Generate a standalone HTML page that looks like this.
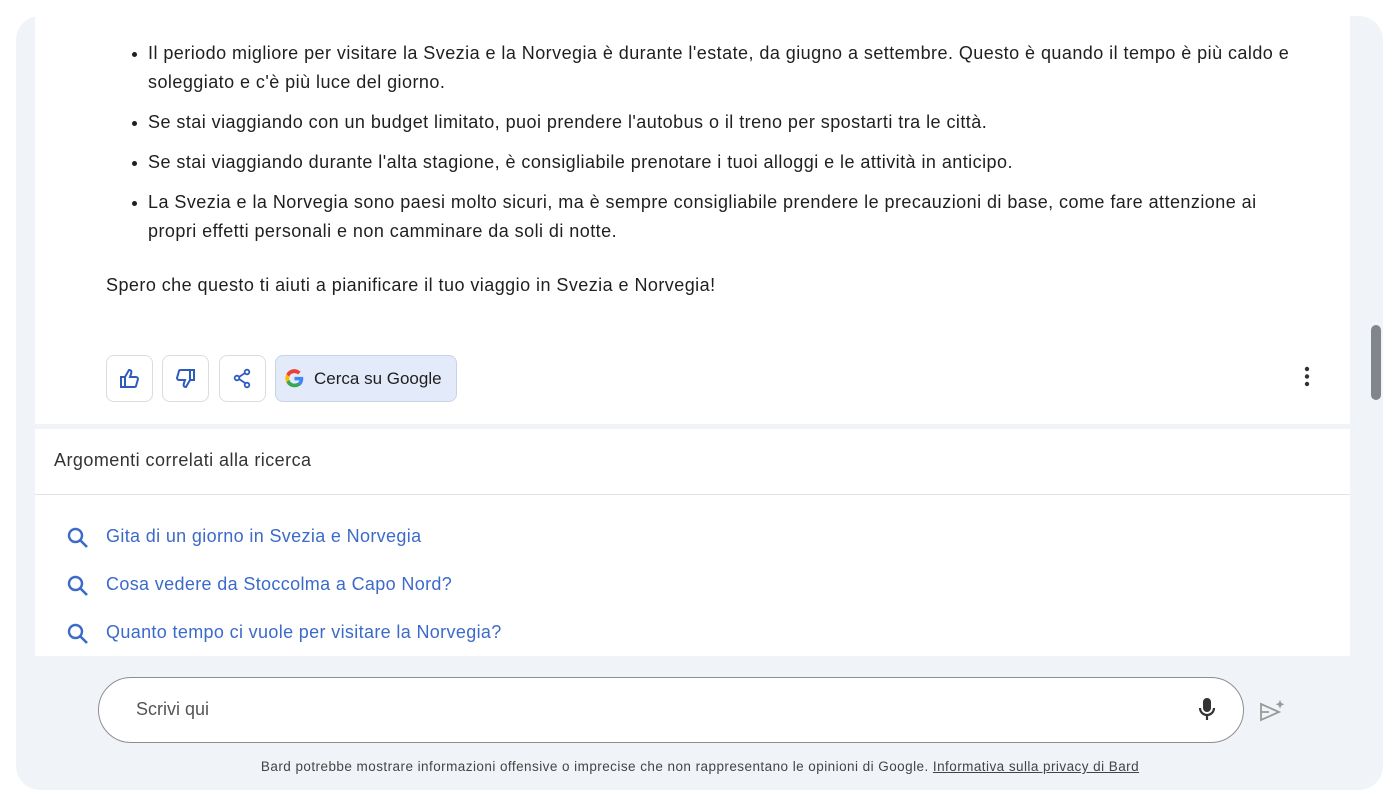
<!DOCTYPE html>
<html><head><meta charset="utf-8"><style>
*{margin:0;padding:0;box-sizing:border-box}
body{width:1400px;height:799px;background:#fff;font-family:"Liberation Sans",sans-serif;position:relative;overflow:hidden;color:#1f1f1f}
.panel{position:absolute;left:16px;top:16px;width:1367px;height:774px;background:#f0f4f9;border-radius:24px}
.card1{position:absolute;left:35px;top:16px;width:1315px;height:408px;background:#fff}
.card2{position:absolute;left:35px;top:429px;width:1315px;height:227px;background:#fff}
ul{position:absolute;left:148px;top:39px;width:1150px;font-size:18px;letter-spacing:0.45px;line-height:29px;list-style:none}
li{position:relative;margin-bottom:11px}
li:before{content:"";position:absolute;left:-16px;top:13px;width:5px;height:5px;border-radius:50%;background:#1f1f1f}
.p{position:absolute;left:106px;top:275px;font-size:18px;letter-spacing:0.45px}
.btn{position:absolute;top:355px;height:47px;border:1px solid #dadce0;border-radius:8px;background:#fff}
.g{position:absolute;left:275px;top:355px;width:182px;height:47px;border-radius:8px;background:#e3ebfa;border:1px solid #c9d3e6;font-size:17px;line-height:45px;padding-left:38px}
.hdr{position:absolute;left:54px;top:450px;font-size:18px;letter-spacing:0.45px;color:#333}
.line{position:absolute;left:35px;top:494px;width:1315px;height:1px;background:#e3e3e3}
.lk{position:absolute;left:106px;font-size:18px;letter-spacing:0.35px;color:#3b6ac9}
.sr{position:absolute;left:66px}
.inp{position:absolute;left:98px;top:677px;width:1146px;height:66px;border:1px solid #8e8e8e;border-radius:33px;background:#fff}
.ph{position:absolute;left:136px;top:699px;font-size:18px;color:#555}
.foot{position:absolute;left:0;width:1400px;top:759px;text-align:center;font-size:13.5px;letter-spacing:0.45px;color:#444}
.sb{position:absolute;left:1371px;top:325px;width:10px;height:75px;border-radius:5px;background:#80868b}
</style></head><body>
<div class="panel"></div>
<div class="card1"></div>
<div class="card2"></div>
<div class="sb"></div>
<ul>
<li>Il periodo migliore per visitare la Svezia e la Norvegia è durante l'estate, da giugno a settembre. Questo è quando il tempo è più caldo e soleggiato e c'è più luce del giorno.</li>
<li>Se stai viaggiando con un budget limitato, puoi prendere l'autobus o il treno per spostarti tra le città.</li>
<li>Se stai viaggiando durante l'alta stagione, è consigliabile prenotare i tuoi alloggi e le attività in anticipo.</li>
<li>La Svezia e la Norvegia sono paesi molto sicuri, ma è sempre consigliabile prendere le precauzioni di base, come fare attenzione ai propri effetti personali e non camminare da soli di notte.</li>
</ul>
<div class="p">Spero che questo ti aiuti a pianificare il tuo viaggio in Svezia e Norvegia!</div>
<div class="btn" style="left:106px;width:47px"><svg width="45" height="45" viewBox="0 0 45 45"><path d="M14 21h4v10h-4zM18 21l4-7c2 0 3 1 2 4l-1 3h6c1 0 2 1 2 2l-2 7c0 1-1 1-2 1h-9" fill="none" stroke="#2f5bbf" stroke-width="2"/></svg></div>
<div class="btn" style="left:162px;width:47px"><svg width="45" height="45" viewBox="0 0 45 45"><path d="M31 24h-4V14h4zM27 24l-4 7c-2 0-3-1-2-4l1-3h-6c-1 0-2-1-2-2l2-7c0-1 1-1 2-1h9" fill="none" stroke="#2f5bbf" stroke-width="2"/></svg></div>
<div class="btn" style="left:219px;width:47px"><svg width="45" height="45" viewBox="0 0 45 45"><circle cx="27" cy="16" r="2.3" fill="none" stroke="#2f5bbf" stroke-width="1.8"/><circle cx="17" cy="22" r="2.3" fill="none" stroke="#2f5bbf" stroke-width="1.8"/><circle cx="27" cy="29" r="2.3" fill="none" stroke="#2f5bbf" stroke-width="1.8"/><path d="M19 21l6-4M19 23l6 4" stroke="#2f5bbf" stroke-width="1.8"/></svg></div>
<div class="g"><svg style="position:absolute;left:8px;top:12px" width="21" height="21" viewBox="0 0 24 24"><path d="M22 12.2c0-.7-.1-1.4-.2-2H12v3.9h5.6a4.8 4.8 0 0 1-2.1 3.1v2.6h3.4c2-1.8 3.1-4.5 3.1-7.6z" fill="#4285f4"/><path d="M12 22c2.8 0 5.2-.9 6.9-2.5l-3.4-2.6c-.9.6-2.1 1-3.5 1-2.7 0-5-1.8-5.8-4.3H2.7v2.7A10 10 0 0 0 12 22z" fill="#34a853"/><path d="M6.2 13.6a6 6 0 0 1 0-3.8V7.1H2.7a10 10 0 0 0 0 9.2z" fill="#fbbc05"/><path d="M12 5.9c1.5 0 2.9.5 4 1.5l3-3A10 10 0 0 0 2.7 7.1l3.5 2.7C7 7.4 9.3 5.9 12 5.9z" fill="#ea4335"/></svg>Cerca su Google</div>
<svg style="position:absolute;left:1300px;top:366px" width="14" height="22"><circle cx="7" cy="3" r="2.2" fill="#333"/><circle cx="7" cy="10.5" r="2.2" fill="#333"/><circle cx="7" cy="18" r="2.2" fill="#333"/></svg>
<div class="hdr">Argomenti correlati alla ricerca</div>
<div class="line"></div>
<svg class="sr" style="top:526px" width="24" height="24" viewBox="0 0 24 24"><circle cx="9.5" cy="9.5" r="6.5" fill="none" stroke="#3b6ac9" stroke-width="2.4"/><path d="M14 14l7 7" stroke="#3b6ac9" stroke-width="2.6"/></svg>
<div class="lk" style="top:526px">Gita di un giorno in Svezia e Norvegia</div>
<svg class="sr" style="top:574px" width="24" height="24" viewBox="0 0 24 24"><circle cx="9.5" cy="9.5" r="6.5" fill="none" stroke="#3b6ac9" stroke-width="2.4"/><path d="M14 14l7 7" stroke="#3b6ac9" stroke-width="2.6"/></svg>
<div class="lk" style="top:574px">Cosa vedere da Stoccolma a Capo Nord?</div>
<svg class="sr" style="top:622px" width="24" height="24" viewBox="0 0 24 24"><circle cx="9.5" cy="9.5" r="6.5" fill="none" stroke="#3b6ac9" stroke-width="2.4"/><path d="M14 14l7 7" stroke="#3b6ac9" stroke-width="2.6"/></svg>
<div class="lk" style="top:622px">Quanto tempo ci vuole per visitare la Norvegia?</div>
<div class="inp"></div>
<div class="ph">Scrivi qui</div>
<svg style="position:absolute;left:1197px;top:697px" width="20" height="26" viewBox="0 0 20 26"><rect x="6" y="1" width="8" height="14" rx="4" fill="#333"/><path d="M3 11a7 7 0 0 0 14 0M10 18v5" fill="none" stroke="#333" stroke-width="2.2"/></svg>
<svg style="position:absolute;left:1258px;top:698px" width="28" height="26" viewBox="0 0 28 26"><path d="M3 6l18 8-18 8zM3 14h8" fill="none" stroke="#999" stroke-width="1.8"/><path d="M22 2l1.3 3 3 1.3-3 1.3L22 10.6l-1.3-3-3-1.3 3-1.3z" fill="#999"/></svg>
<div class="foot">Bard potrebbe mostrare informazioni offensive o imprecise che non rappresentano le opinioni di Google. <u>Informativa sulla privacy di Bard</u></div>
</body></html>
